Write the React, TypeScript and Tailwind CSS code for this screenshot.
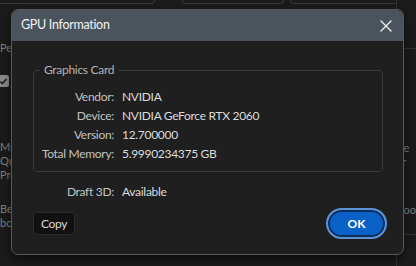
import React from "react";

const rows: [string, string][] = [
  ["Vendor:", "NVIDIA"],
  ["Device:", "NVIDIA GeForce RTX 2060"],
  ["Version:", "12.700000"],
  ["Total Memory:", "5.9990234375 GB"],
];

const CloseIcon: React.FC = () => (
  <svg width="12" height="12" viewBox="0 0 12 12" fill="none">
    <path d="M1 1L11 11M11 1L1 11" stroke="#f2f2f2" strokeWidth="1.3" strokeLinecap="round" />
  </svg>
);

const App: React.FC = () => {
  return (
    <div className="relative w-[416px] h-[266px] overflow-hidden bg-[#1b1b1b] text-[12px] font-['Lato',sans-serif]">
      {/* page behind the dialog */}
      <div className="flex h-full">
        <div className="w-[160px] flex flex-col text-[#7d7d7d] text-[11px] leading-[14px]">
          <div className="h-[4px] border-b border-r border-[#383838] rounded-br-[4px]" />
          <div className="mt-[37px]">Pe</div>
          <div className="mt-[20px] -ml-[3px] w-[12px] h-[12px] rounded-[2px] bg-[#8a8a8a] flex items-center justify-center">
            <svg width="9" height="9" viewBox="0 0 9 9" fill="none">
              <path d="M1.5 4.5L3.5 6.5L7.5 2" stroke="#1b1b1b" strokeWidth="1.6" />
            </svg>
          </div>
          <div className="mt-[53px]">Mu</div>
          <div>Qu</div>
          <div>Pre</div>
          <div className="mt-[20px]">Be</div>
          <div>boo</div>
        </div>
        <div className="ml-[27px] w-[104px] h-[4px] border-b border-x border-[#383838] rounded-b-[4px]" />
        <div className="ml-[6px] w-[110px] h-[4px] border-b border-l border-[#383838] rounded-bl-[4px]" />
        <div className="flex-1 border-l border-[#333] flex flex-col text-[#7d7d7d] text-[11px] leading-[14px]">
          <div className="mt-[48px] border-t border-[#333]" />
          <div className="mt-[92px]">ne</div>
          <div className="ml-[1px]">fr</div>
          <div className="mt-[34px]">noo</div>
          <div className="mt-[17px] border-t border-[#333]" />
        </div>
      </div>

      {/* dialog */}
      <div className="absolute left-[11px] top-[9px] w-[393px] h-[246px] rounded-[7px] border border-[#55595d] bg-[#1f1f1f] shadow-[0_4px_10px_rgba(0,0,0,0.5)] overflow-hidden flex flex-col tracking-[-0.3px]">
        <div className="h-[31px] bg-[#4b545c] flex items-center justify-between pl-[9px] pr-[11px] shrink-0">
          <span className="text-[12.5px] text-[#f2f2f2]">GPU Information</span>
          <CloseIcon />
        </div>
        <div className="flex flex-col pl-[21px] pr-[20px]">
          <fieldset className="mt-[21px] w-[350px] border border-[#3a3a3a] rounded-[4px] pb-[8px]">
            <legend className="ml-[6px] px-[4px] text-[#b4b4b4] leading-[16px]">Graphics Card</legend>
            <div className="mt-[9px] grid grid-cols-[80px_1fr] gap-x-[8px] leading-[19px] whitespace-nowrap">
              {rows.map(([label, value]) => (
                <React.Fragment key={label}>
                  <span className="text-right text-[#c2c2c2]">{label}</span>
                  <span className="text-[#dcdcdc]">{value}</span>
                </React.Fragment>
              ))}
            </div>
          </fieldset>
          <div className="mt-[10px] ml-[1px] grid grid-cols-[80px_1fr] gap-x-[8px] leading-[19px] whitespace-nowrap">
            <span className="text-right text-[#c2c2c2]">Draft 3D:</span>
            <span className="text-[#dcdcdc]">Available</span>
          </div>
          <div className="mt-[7px] flex items-center justify-between">
            <button className="h-[23px] px-[7px] rounded-[4px] border border-[#2c2c2c] bg-[#111111] text-[#dcdcdc] text-[12px]">
              Copy
            </button>
            <button className="mr-[-4px] h-[31px] w-[61px] rounded-full border-2 border-[#5b93d6] bg-[#0a62c9] shadow-[inset_0_0_0_2px_#0d2f57] text-white font-bold text-[12px] tracking-normal">
              OK
            </button>
          </div>
        </div>
      </div>
    </div>
  );
};

export default App;
